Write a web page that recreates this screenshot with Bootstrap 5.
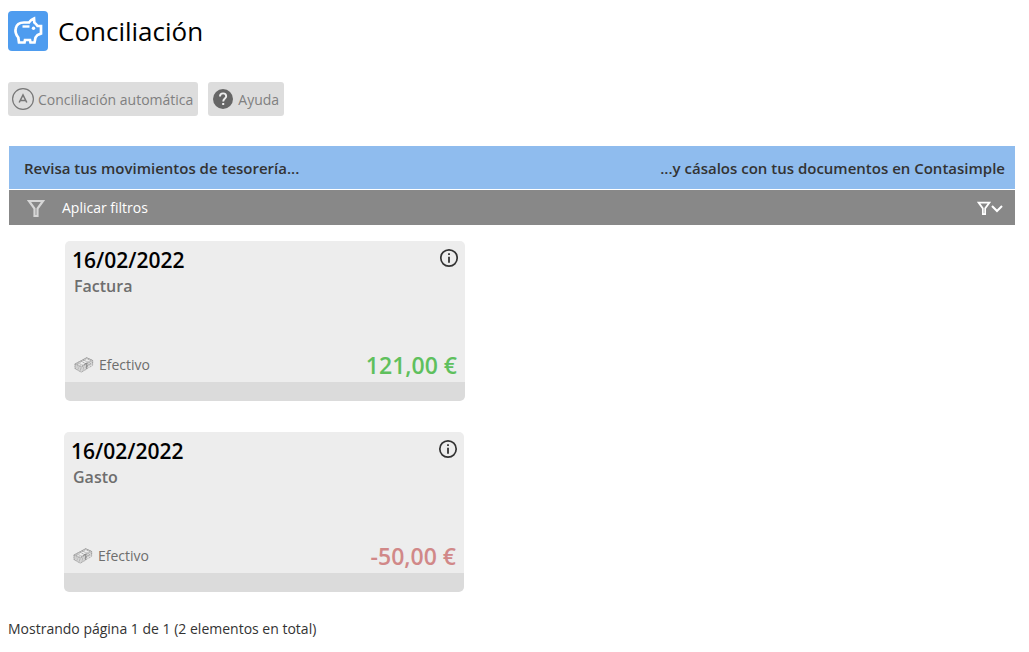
<!DOCTYPE html>
<html lang="es">
<head>
<meta charset="utf-8">
<meta name="viewport" content="width=device-width, initial-scale=1">
<title>Conciliación</title>
<link href="https://cdn.jsdelivr.net/npm/bootstrap@5.3.0/dist/css/bootstrap.min.css" rel="stylesheet">
<style>
  body { font-family: "Open Sans", "Liberation Sans", sans-serif; font-size: 14px; line-height: 20px; color: #333; background: #fff; }
  svg { display: block; flex: none; }
  .page-head { padding: 11px 8px 0; gap: 10px; }
  .page-head h1 { font-size: 26px; line-height: 40px; font-weight: 400; color: #000; }
  .toolbar { padding: 31px 8px 30px; gap: 10px; }
  .tool-btn { --bs-btn-font-size: 14px; --bs-btn-line-height: 20px; --bs-btn-border-radius: 3px;
    --bs-btn-border-width: 0; --bs-btn-color: #808080; --bs-btn-bg: #ddd; --bs-btn-hover-bg: #d0d0d0; --bs-btn-hover-color: #666;
    height: 34px; padding: 2px 5px 0 4px; }
  .board { margin: 0 14px 0 9px; }
  .banner { background: #8fbcee; height: 43px; padding: 0 10px 0 15px; font-size: 15px; font-weight: 600; }
  .filters { background: #888; height: 35px; margin-top: 1px; padding: 0 12px 0 18px; color: #fff; }
  .filters .btn { --bs-btn-font-size: 14px; --bs-btn-line-height: 20px; --bs-btn-color: #fff; --bs-btn-hover-color: #fff; --bs-btn-border-width: 0; }
  .filter-toggle { gap: 17px; }
  .moves { padding: 16px 0 27px 56px; gap: 31px; }
  .move { width: 400px; max-width: 100%; border: 0; border-radius: 5px; background: #ededed; overflow: hidden; }
  .move + .move { margin-left: -1px; }
  .move .card-body { height: 141px; padding: 7px 8px 2px 7px; color: #6e6e6e; }
  .move .card-footer { height: 19px; padding: 0; border: 0; background: #dbdbdb; }
  .move .card-top { margin-right: -2px; }
  .move h2 { font-size: 21px; line-height: 25px; font-weight: 600; color: #000; }
  .kind { font-size: 16px; line-height: 26px; font-weight: 600; padding-left: 2px; }
  .method { padding-left: 2px; gap: 5px; }
  .amount { font-size: 23px; line-height: 30px; font-weight: 600; }
  .income { color: #5fc05d; }
  .expense { color: #d18888; }
  .pager { padding: 0 8px; }
</style>
</head>
<body>
<svg width="0" height="0" class="position-absolute" aria-hidden="true">
  <symbol id="funnel" viewBox="0 0 18 18"><path d="M2 2H16L10.500 9.500V17H7.500V9.500Z" fill="none" stroke="currentColor" stroke-width="2.200"/></symbol>
  <symbol id="info" viewBox="0 0 20 20"><circle cx="10" cy="10" r="8.200" fill="none" stroke="currentColor" stroke-width="1.700"/><path d="M9.100 5.200h1.800V7H9.100zM9.100 8.700h1.800v6H9.100z" fill="currentColor"/></symbol>
  <symbol id="cash" viewBox="0 0 22 18">
    <g fill="#ededed" stroke="#8c8c8c" stroke-width=".7">
      <path d="M1 8v5l7 4 6-3.500V10l6.500-3.500V4L14 1z" stroke-dasharray="1.500 .5"/>
      <path d="M1 12.500l7 3.500 6-3.500M1 11l7 3.500 6-3.500M1 9.500L8 13l6-3.500M14 13l6.500-3.500v-5M14 11l6.500-3.500M14 9.500L20.500 6" stroke-dasharray="1.500 .5"/>
      <path d="M1 8l7 3.500L20.500 4 14 1z"/>
      <path d="M3 8l5 2.500L18.500 4 14 2zM5 7l5 2.500M8 5l5 2.500M10.500 3.500l5 2.500" stroke-dasharray="1.500 .5"/>
    </g>
    <path d="M11 8.500l3-1.500v6" fill="none" stroke="#777" stroke-width=".8"/>
  </symbol>
</svg>

<header class="page-head d-flex align-items-center">
  <svg width="40" height="40" viewBox="0 0 40 40" aria-hidden="true">
    <rect width="40" height="40" rx="4" fill="#4e9cef"/>
    <path d="M11 31.500L10.300 26.500C7.800 23.500 7 20.500 7.700 17.500C8.500 13.500 12 11.500 16 11.500H21C22 9.500 23.500 8.500 26 7.500L26.300 11.500C27.800 12.500 28.800 14 29.500 15H33V22.500L29.500 24L27.500 26.500L26.500 31.500H22.500L22 29H17L16.500 31.500Z" fill="none" stroke="#fff" stroke-width="2.700" stroke-linejoin="miter"/>
    <path d="M14.500 15.500h7" stroke="#fff" stroke-width="2.400"/><circle cx="25.500" cy="17.300" r="1.700" fill="#fff"/>
  </svg>
  <h1 class="m-0">Conciliación</h1>
</header>

<div class="toolbar d-flex flex-wrap">
  <button type="button" class="btn tool-btn d-flex align-items-center">
    <svg class="me-1" width="22" height="24" viewBox="0 0 22 24" aria-hidden="true"><g fill="none" stroke="#777"><circle cx="11" cy="11" r="10.400" stroke-width="1.200"/><path d="M7.200 14.500L11 7l3.800 7.500M8.800 12.500h4.400" stroke-width="1.600"/></g></svg>
    Conciliación automática
  </button>
  <button type="button" class="btn tool-btn d-flex align-items-center">
    <svg class="me-1" width="22" height="24" viewBox="0 0 22 24" aria-hidden="true"><circle cx="11" cy="11" r="10" fill="#666"/><path d="M8 8.500C8 4.200 14.200 4.400 14.200 8.300C14.200 10.500 11.200 10.700 11.200 13.500" fill="none" stroke="#eee" stroke-width="1.900"/><rect x="10.200" y="15" width="2" height="2" fill="#eee"/></svg>
    Ayuda
  </button>
</div>

<main class="board">
  <div class="banner d-flex align-items-center justify-content-between">
    <span>Revisa tus movimientos de tesorería...</span>
    <span>...y cásalos con tus documentos en Contasimple</span>
  </div>
  <div class="filters d-flex align-items-center justify-content-between">
    <button type="button" class="btn p-0 d-flex align-items-center filter-toggle">
      <svg width="18" height="18" color="#d6d6d6" aria-hidden="true"><use href="#funnel"/></svg>
      <span>Aplicar filtros</span>
    </button>
    <button type="button" class="btn p-0 d-flex align-items-center" aria-label="Mostrar filtros">
      <svg width="14" height="14" aria-hidden="true"><use href="#funnel"/></svg>
      <svg width="12" height="12" viewBox="0 0 12 12" aria-hidden="true"><path d="M1 4l5 5 5-5" fill="none" stroke="#fff" stroke-width="2"/></svg>
    </button>
  </div>

  <div class="moves d-flex flex-column">
    <article class="card move">
      <div class="card-body d-flex flex-column justify-content-between">
        <div class="card-top d-flex justify-content-between align-items-start">
          <div><h2 class="m-0">16/02/2022</h2><div class="kind">Factura</div></div>
          <button type="button" class="btn p-0 border-0" aria-label="Información"><svg width="20" height="20" color="#333" aria-hidden="true"><use href="#info"/></svg></button>
        </div>
        <div class="d-flex justify-content-between align-items-center">
          <span class="method d-flex align-items-center"><svg width="20" height="18" aria-hidden="true"><use href="#cash"/></svg>Efectivo</span>
          <span class="amount income">121,00 €</span>
        </div>
      </div>
      <div class="card-footer"></div>
    </article>
    <article class="card move">
      <div class="card-body d-flex flex-column justify-content-between">
        <div class="card-top d-flex justify-content-between align-items-start">
          <div><h2 class="m-0">16/02/2022</h2><div class="kind">Gasto</div></div>
          <button type="button" class="btn p-0 border-0" aria-label="Información"><svg width="20" height="20" color="#333" aria-hidden="true"><use href="#info"/></svg></button>
        </div>
        <div class="d-flex justify-content-between align-items-center">
          <span class="method d-flex align-items-center"><svg width="20" height="18" aria-hidden="true"><use href="#cash"/></svg>Efectivo</span>
          <span class="amount expense">-50,00 €</span>
        </div>
      </div>
      <div class="card-footer"></div>
    </article>
  </div>
</main>

<footer class="pager">Mostrando página 1 de 1 (2 elementos en total)</footer>
<script src="https://cdn.jsdelivr.net/npm/bootstrap@5.3.0/dist/js/bootstrap.bundle.min.js"></script>
</body>
</html>
